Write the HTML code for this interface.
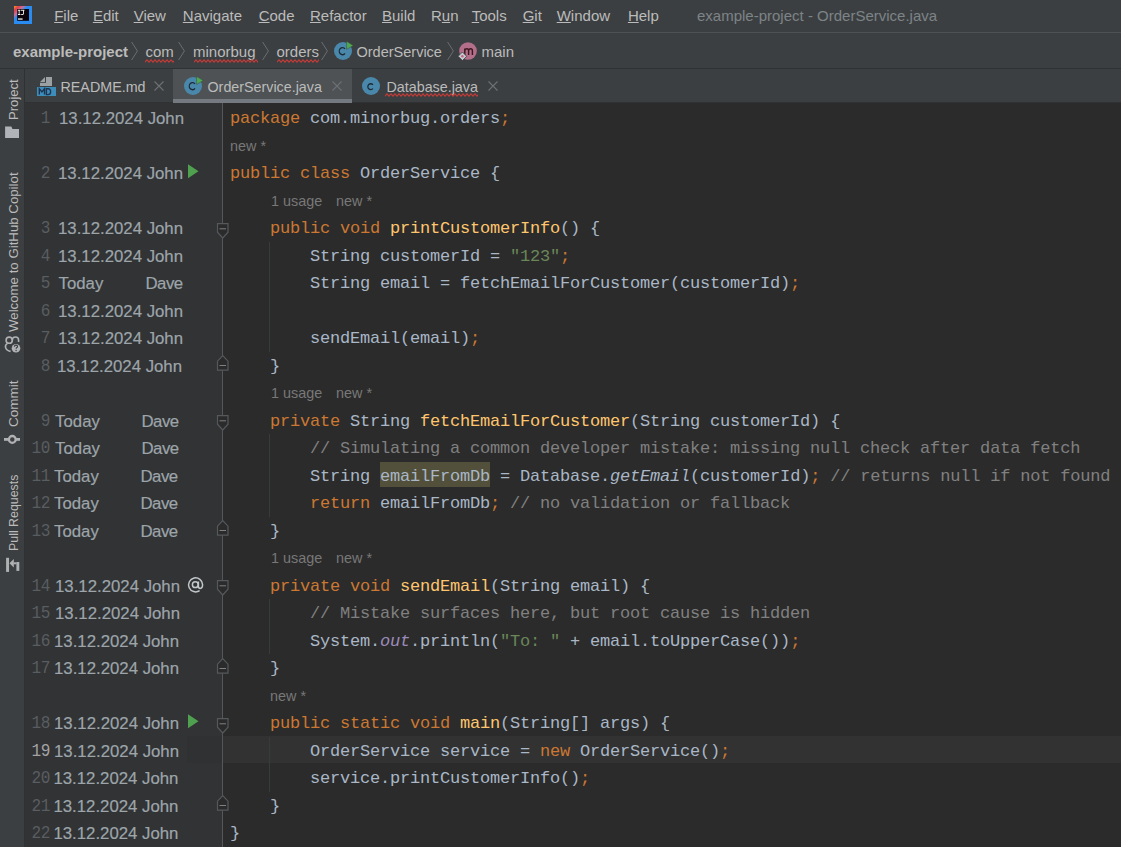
<!DOCTYPE html>
<html><head><meta charset="utf-8"><style>
*{margin:0;padding:0;box-sizing:border-box}
html,body{width:1121px;height:847px;overflow:hidden;background:#3c3f41;font-family:"Liberation Sans",sans-serif}
.a{position:absolute;white-space:pre}
.menu{font-size:15px;color:#bbbbbb;top:7px;line-height:17px}
.u{text-decoration:underline;text-underline-offset:1px}
.code{font-family:"Liberation Mono",monospace;font-size:17px;letter-spacing:-0.2px;line-height:27.5px;height:27.5px;color:#a9b7c6}
.hint{font-size:14.4px;color:#787878;line-height:27.5px;height:27.5px;margin-top:0.2px}
.ln{font-family:"Liberation Mono",monospace;font-size:17.5px;letter-spacing:-0.5px;color:#5a5d60;line-height:27.5px;margin-top:0.4px;text-align:right;width:40px;transform:scaleX(0.92);transform-origin:100% 50%}
.bl{font-size:16.8px;color:#9da5aa;line-height:27.5px;margin-top:0.3px;-webkit-text-stroke:0.2px #9da5aa}
.nav{font-size:15px;color:#bbbbbb;top:43px;line-height:18px}
.tab{font-size:14.3px;color:#bbbbbb;top:78px;line-height:18px}
</style></head><body>

<div class="a" style="left:0;top:32px;width:1121px;height:1px;background:#4f5254"></div>
<svg class="a" style="left:14px;top:6px" width="18" height="18" viewBox="0 0 18 18">
<defs><linearGradient id="lg" x1="0" y1="0" x2="1" y2="1"><stop offset="0" stop-color="#f9a21c"/><stop offset="0.13" stop-color="#e23f4a"/><stop offset="0.27" stop-color="#c86f98"/><stop offset="0.38" stop-color="#2a8cf0" stop-opacity="1"/><stop offset="1" stop-color="#2a8cf0"/></linearGradient></defs>
<rect x="0" y="0" width="18" height="18" fill="url(#lg)"/>
<rect x="3.2" y="3" width="11.8" height="11.8" fill="#0c0309"/>
<path d="M3.9 3.8 H6.4 V4.7 H5.6 V8.1 H6.4 V8.9 H3.9 V8.1 H4.7 V4.7 H3.9 Z" fill="#f2f2f2"/>
<path d="M7 3.8 H10.4 V4.7 H9.9 V7.8 C9.9 8.6 9.4 8.9 8.6 8.9 H7.2 V8 H8.4 C8.8 8 9 7.8 9 7.4 V4.7 H7 Z" fill="#f2f2f2"/>
<rect x="4" y="12.4" width="4.6" height="1.3" fill="#f2f2f2"/>
</svg>
<div class="a menu" style="left:54.2px"><span class="u">F</span>ile</div>
<div class="a menu" style="left:92.9px"><span class="u">E</span>dit</div>
<div class="a menu" style="left:133.7px"><span class="u">V</span>iew</div>
<div class="a menu" style="left:182.8px"><span class="u">N</span>avigate</div>
<div class="a menu" style="left:258.7px"><span class="u">C</span>ode</div>
<div class="a menu" style="left:310.0px"><span class="u">R</span>efactor</div>
<div class="a menu" style="left:382.0px"><span class="u">B</span>uild</div>
<div class="a menu" style="left:431.0px">R<span class="u">u</span>n</div>
<div class="a menu" style="left:471.7px"><span class="u">T</span>ools</div>
<div class="a menu" style="left:522.7px"><span class="u">G</span>it</div>
<div class="a menu" style="left:556.7px"><span class="u">W</span>indow</div>
<div class="a menu" style="left:627.9px"><span class="u">H</span>elp</div>
<div class="a menu" style="left:697px;color:#7d8487">example-project - OrderService.java</div>
<div class="a" style="left:0;top:68px;width:1121px;height:1px;background:#2f3133"></div>
<div class="a nav" style="left:13px;font-weight:bold;color:#bbbbbb">example-project</div>
<svg class="a" style="left:130.7px;top:41px" width="8" height="20" viewBox="0 0 8 20"><path d="M0.6 1 L6.4 10 L0.6 19" fill="none" stroke="#6a6e71" stroke-width="1"/></svg>
<div class="a nav" style="left:145.5px">com</div>
<svg class="a" style="left:145px;top:58.5px" width="29" height="4" viewBox="0 0 29 4"><path d="M0 3.2 L2 0.8 L4 3.2 L6 0.8 L8 3.2 L10 0.8 L12 3.2 L14 0.8 L16 3.2 L18 0.8 L20 3.2 L22 0.8 L24 3.2 L26 0.8 L28 3.2 L30 0.8 L32 3.2" fill="none" stroke="#c23b38" stroke-width="1.1"/></svg>
<svg class="a" style="left:177.7px;top:41px" width="8" height="20" viewBox="0 0 8 20"><path d="M0.6 1 L6.4 10 L0.6 19" fill="none" stroke="#6a6e71" stroke-width="1"/></svg>
<div class="a nav" style="left:193px">minorbug</div>
<svg class="a" style="left:194px;top:58.5px" width="64" height="4" viewBox="0 0 64 4"><path d="M0 3.2 L2 0.8 L4 3.2 L6 0.8 L8 3.2 L10 0.8 L12 3.2 L14 0.8 L16 3.2 L18 0.8 L20 3.2 L22 0.8 L24 3.2 L26 0.8 L28 3.2 L30 0.8 L32 3.2 L34 0.8 L36 3.2 L38 0.8 L40 3.2 L42 0.8 L44 3.2 L46 0.8 L48 3.2 L50 0.8 L52 3.2 L54 0.8 L56 3.2 L58 0.8 L60 3.2 L62 0.8 L64 3.2 L66 0.8 L68 3.2" fill="none" stroke="#c23b38" stroke-width="1.1"/></svg>
<svg class="a" style="left:261.9px;top:41px" width="8" height="20" viewBox="0 0 8 20"><path d="M0.6 1 L6.4 10 L0.6 19" fill="none" stroke="#6a6e71" stroke-width="1"/></svg>
<div class="a nav" style="left:276.5px">orders</div>
<svg class="a" style="left:277px;top:58.5px" width="42" height="4" viewBox="0 0 42 4"><path d="M0 3.2 L2 0.8 L4 3.2 L6 0.8 L8 3.2 L10 0.8 L12 3.2 L14 0.8 L16 3.2 L18 0.8 L20 3.2 L22 0.8 L24 3.2 L26 0.8 L28 3.2 L30 0.8 L32 3.2 L34 0.8 L36 3.2 L38 0.8 L40 3.2 L42 0.8 L44 3.2" fill="none" stroke="#c23b38" stroke-width="1.1"/></svg>
<svg class="a" style="left:321.4px;top:41px" width="8" height="20" viewBox="0 0 8 20"><path d="M0.6 1 L6.4 10 L0.6 19" fill="none" stroke="#6a6e71" stroke-width="1"/></svg>
<svg class="a" style="left:333px;top:40.8px" width="22" height="20" viewBox="0 0 22 20"><circle cx="10" cy="10" r="9" fill="#4a88ab"/><path d="M12 7.9 A3.2 3.6 0 1 0 12 12.4" fill="none" stroke="#1d2a36" stroke-width="1.3"/><path d="M13.6 0.3 L20.2 4.6 L13.6 8.4 Z" fill="#4fa94f" stroke="#3a4a48" stroke-width="0.5"/></svg>
<div class="a nav" style="left:356.5px;font-size:14.5px">OrderService</div>
<svg class="a" style="left:446.7px;top:41px" width="8" height="20" viewBox="0 0 8 20"><path d="M0.6 1 L6.4 10 L0.6 19" fill="none" stroke="#6a6e71" stroke-width="1"/></svg>
<svg class="a" style="left:457px;top:41px" width="22" height="22" viewBox="0 0 22 22">
<circle cx="11" cy="10" r="8.8" fill="#b36f89"/>
<path d="M7.8 13.9 V7.4 M7.8 9.6 C8.2 8.2 9 7.8 9.8 7.8 C11 7.8 11.6 8.5 11.6 9.8 V13.9 M11.6 9.6 C12 8.2 12.8 7.8 13.6 7.8 C14.8 7.8 15.4 8.5 15.4 9.8 V13.9" fill="none" stroke="#3e1620" stroke-width="1.45"/>
<path d="M5.4 11 L9.7 15.3 L5.4 19.6 L1.1 15.3 Z" fill="#c4cacd" stroke="#3c3f41" stroke-width="0.8"/>
<circle cx="5.4" cy="15.3" r="1.2" fill="#c95f7d"/>
</svg>
<div class="a nav" style="left:481.5px">main</div>
<div class="a" style="left:24px;top:69px;width:1px;height:778px;background:#2f3133"></div>
<div class="a" style="left:6.7px;top:120px;font-size:13.1px;color:#bbbbbb;line-height:14px;transform-origin:0 0;transform:rotate(-90deg)">Project</div>
<svg class="a" style="left:5px;top:126px" width="14" height="13" viewBox="0 0 14 13"><path d="M0.1 0.5 H6.3 L7.5 3 H14 V12.1 H0.1 Z" fill="#b0b4b8"/></svg>
<div class="a" style="left:6.7px;top:332px;font-size:13.25px;color:#bbbbbb;line-height:14px;transform-origin:0 0;transform:rotate(-90deg)">Welcome to GitHub Copilot</div>
<svg class="a" style="left:3px;top:335px" width="18" height="19" viewBox="0 0 18 19"><g fill="none" stroke="#afb1b3" stroke-width="1.6"><circle cx="6.2" cy="5.2" r="3.1"/><path d="M9.3 5.2 A3.1 3.1 0 0 1 15.6 5.2 V7"/><path d="M4.2 8.6 C1.6 10.2 1.4 15.2 7.6 16.4"/></g><circle cx="13" cy="13.2" r="4.3" fill="#afb1b3"/><path d="M11.4 11.8 C11.4 10.6 12.2 10.1 13 10.1 C13.9 10.1 14.6 10.7 14.6 11.5 C14.6 12.5 13.1 12.6 13.1 13.8" fill="none" stroke="#3c3f41" stroke-width="1.1"/><circle cx="13.1" cy="15.5" r="0.7" fill="#3c3f41"/></svg>
<div class="a" style="left:6.7px;top:427px;font-size:13.5px;color:#bbbbbb;line-height:14px;transform-origin:0 0;transform:rotate(-90deg)">Commit</div>
<svg class="a" style="left:4px;top:433px" width="17" height="13" viewBox="0 0 17 13"><path d="M0 6.4 H16" stroke="#afb1b3" stroke-width="2.8"/><circle cx="8.3" cy="6.4" r="3.4" fill="#3c3f41" stroke="#afb1b3" stroke-width="2.3"/></svg>
<div class="a" style="left:6.7px;top:551px;font-size:12.4px;color:#bbbbbb;line-height:14px;transform-origin:0 0;transform:rotate(-90deg)">Pull Requests</div>
<svg class="a" style="left:5px;top:556px" width="16" height="16" viewBox="0 0 16 16"><g fill="#afb1b3"><rect x="1.1" y="1.8" width="2.95" height="14.1"/><path d="M4.5 7.2 L8.8 3 V11.4 Z"/><rect x="8.5" y="6.3" width="3" height="2"/><rect x="11.4" y="6" width="2.9" height="8.9"/></g></svg>
<div class="a" style="left:173px;top:69px;width:179px;height:34px;background:#4e5254"></div>
<div class="a" style="left:25px;top:102px;width:1096px;height:1px;background:#2f3133"></div>
<div class="a" style="left:173px;top:99px;width:179px;height:4px;background:#747a80"></div>
<svg class="a" style="left:36px;top:76px" width="21" height="21" viewBox="0 0 21 21">
<path d="M4 6 L9 1 V6 Z" fill="#9aa0a3"/><rect x="10" y="1" width="6" height="9" fill="#9aa0a3"/><rect x="4" y="6.8" width="12" height="3.2" fill="#9aa0a3"/>
<rect x="1" y="11" width="19" height="9" fill="#3d8dbb"/>
<path d="M3.3 18.6 V12.8 L5.9 16 L8.5 12.8 V18.6 M10.4 12.8 V18.6 H12 C13.9 18.6 14.6 17.2 14.6 15.7 C14.6 14.2 13.9 12.8 12 12.8 Z" fill="none" stroke="#1d3350" stroke-width="1.4"/>
</svg>
<div class="a tab" style="left:60.5px">README.md</div>
<svg class="a" style="left:154px;top:81px" width="10" height="10" viewBox="0 0 10 10"><path d="M0.5 0.5 L9.5 9.5 M9.5 0.5 L0.5 9.5" stroke="#6e7173" stroke-width="1.1"/></svg>
<svg class="a" style="left:183px;top:75.75px" width="22" height="20" viewBox="0 0 22 20"><circle cx="10" cy="10" r="9" fill="#4a88ab"/><path d="M12 7.9 A3.2 3.6 0 1 0 12 12.4" fill="none" stroke="#1d2a36" stroke-width="1.3"/><path d="M13.6 0.3 L20.2 4.6 L13.6 8.4 Z" fill="#4fa94f" stroke="#3a4a48" stroke-width="0.5"/></svg>
<div class="a tab" style="left:207.5px">OrderService.java</div>
<svg class="a" style="left:331.5px;top:81px" width="10" height="10" viewBox="0 0 10 10"><path d="M0.5 0.5 L9.5 9.5 M9.5 0.5 L0.5 9.5" stroke="#6e7173" stroke-width="1.1"/></svg>
<svg class="a" style="left:361px;top:75.75px" width="22" height="20" viewBox="0 0 22 20"><circle cx="10" cy="10" r="9" fill="#4a88ab"/><path d="M11.9 8.7 A2.9 2.9 0 1 0 11.9 12.6" fill="none" stroke="#1d2a36" stroke-width="1.3"/></svg>
<div class="a tab" style="left:386.5px">Database.java</div>
<svg class="a" style="left:385px;top:93.0px" width="93" height="4" viewBox="0 0 93 4"><path d="M0 3.2 L2 0.8 L4 3.2 L6 0.8 L8 3.2 L10 0.8 L12 3.2 L14 0.8 L16 3.2 L18 0.8 L20 3.2 L22 0.8 L24 3.2 L26 0.8 L28 3.2 L30 0.8 L32 3.2 L34 0.8 L36 3.2 L38 0.8 L40 3.2 L42 0.8 L44 3.2 L46 0.8 L48 3.2 L50 0.8 L52 3.2 L54 0.8 L56 3.2 L58 0.8 L60 3.2 L62 0.8 L64 3.2 L66 0.8 L68 3.2 L70 0.8 L72 3.2 L74 0.8 L76 3.2 L78 0.8 L80 3.2 L82 0.8 L84 3.2 L86 0.8 L88 3.2 L90 0.8 L92 3.2 L94 0.8 L96 3.2" fill="none" stroke="#c23b38" stroke-width="1.1"/></svg>
<svg class="a" style="left:488px;top:81px" width="10" height="10" viewBox="0 0 10 10"><path d="M0.5 0.5 L9.5 9.5 M9.5 0.5 L0.5 9.5" stroke="#6e7173" stroke-width="1.1"/></svg>
<div class="a" style="left:25px;top:103px;width:197px;height:744px;background:#313335"></div>
<div class="a" style="left:222px;top:103px;width:899px;height:744px;background:#2b2b2b"></div>
<div class="a" style="left:222px;top:103px;width:1px;height:744px;background:#555759"></div>
<div class="a" style="left:223px;top:735.7px;width:898px;height:27px;background:#323232"></div>
<div class="a" style="left:187px;top:735.7px;width:35px;height:27px;background:#2f3133"></div>
<div class="a" style="left:380px;top:461.5px;width:110px;height:25.5px;background:#52503a"></div>
<div class="a" style="left:269px;top:241.5px;width:1px;height:110.0px;background:#393b3b"></div>
<div class="a" style="left:269px;top:434.0px;width:1px;height:82.5px;background:#393b3b"></div>
<div class="a" style="left:269px;top:599.0px;width:1px;height:55.0px;background:#393b3b"></div>
<div class="a" style="left:269px;top:736.5px;width:1px;height:55.0px;background:#393b3b"></div>
<div class="a code" style="left:230px;top:105.0px"><span style="color:#cc7832;">package</span><span style="color:#a9b7c6;"> com.minorbug.orders</span><span style="color:#cc7832;">;</span></div>
<div class="a code" style="left:230px;top:160.0px"><span style="color:#cc7832;">public class</span><span style="color:#a9b7c6;"> OrderService {</span></div>
<div class="a code" style="left:230px;top:215.0px"><span style="color:#cc7832;">    public void </span><span style="color:#ffc66d;">printCustomerInfo</span><span style="color:#a9b7c6;">() {</span></div>
<div class="a code" style="left:230px;top:242.5px"><span style="color:#a9b7c6;">        String customerId = </span><span style="color:#6a8759;">&quot;123&quot;</span><span style="color:#cc7832;">;</span></div>
<div class="a code" style="left:230px;top:270.0px"><span style="color:#a9b7c6;">        String email = fetchEmailForCustomer(customerId)</span><span style="color:#cc7832;">;</span></div>
<div class="a code" style="left:230px;top:325.0px"><span style="color:#a9b7c6;">        sendEmail(email)</span><span style="color:#cc7832;">;</span></div>
<div class="a code" style="left:230px;top:352.5px"><span style="color:#a9b7c6;">    }</span></div>
<div class="a code" style="left:230px;top:407.5px"><span style="color:#cc7832;">    private </span><span style="color:#a9b7c6;">String </span><span style="color:#ffc66d;">fetchEmailForCustomer</span><span style="color:#a9b7c6;">(String customerId) {</span></div>
<div class="a code" style="left:230px;top:435.0px"><span style="color:#808080;">        // Simulating a common developer mistake: missing null check after data fetch</span></div>
<div class="a code" style="left:230px;top:462.5px"><span style="color:#a9b7c6;">        String </span><span style="color:#a9b7c6;">emailFromDb</span><span style="color:#a9b7c6;"> = Database.</span><span style="color:#a9b7c6;font-style:italic;">getEmail</span><span style="color:#a9b7c6;">(customerId)</span><span style="color:#cc7832;">;</span><span style="color:#808080;"> // returns null if not found</span></div>
<div class="a code" style="left:230px;top:490.0px"><span style="color:#cc7832;">        return </span><span style="color:#a9b7c6;">emailFromDb</span><span style="color:#cc7832;">;</span><span style="color:#808080;"> // no validation or fallback</span></div>
<div class="a code" style="left:230px;top:517.5px"><span style="color:#a9b7c6;">    }</span></div>
<div class="a code" style="left:230px;top:572.5px"><span style="color:#cc7832;">    private void </span><span style="color:#ffc66d;">sendEmail</span><span style="color:#a9b7c6;">(String email) {</span></div>
<div class="a code" style="left:230px;top:600.0px"><span style="color:#808080;">        // Mistake surfaces here, but root cause is hidden</span></div>
<div class="a code" style="left:230px;top:627.5px"><span style="color:#a9b7c6;">        System.</span><span style="color:#9d8cbb;font-style:italic;">out</span><span style="color:#a9b7c6;">.println(</span><span style="color:#6a8759;">&quot;To: &quot;</span><span style="color:#a9b7c6;"> + email.toUpperCase())</span><span style="color:#cc7832;">;</span></div>
<div class="a code" style="left:230px;top:655.0px"><span style="color:#a9b7c6;">    }</span></div>
<div class="a code" style="left:230px;top:710.0px"><span style="color:#cc7832;">    public static void </span><span style="color:#ffc66d;">main</span><span style="color:#a9b7c6;">(String[] args) {</span></div>
<div class="a code" style="left:230px;top:737.5px"><span style="color:#a9b7c6;">        OrderService service = </span><span style="color:#cc7832;">new </span><span style="color:#a9b7c6;">OrderService()</span><span style="color:#cc7832;">;</span></div>
<div class="a code" style="left:230px;top:765.0px"><span style="color:#a9b7c6;">        service.printCustomerInfo()</span><span style="color:#cc7832;">;</span></div>
<div class="a code" style="left:230px;top:792.5px"><span style="color:#a9b7c6;">    }</span></div>
<div class="a code" style="left:230px;top:820.0px"><span style="color:#a9b7c6;">}</span></div>
<div class="a hint" style="left:230px;top:132.5px">new *</div>
<div class="a hint" style="left:271px;top:187.5px">1 usage</div>
<div class="a hint" style="left:336px;top:187.5px">new *</div>
<div class="a hint" style="left:271px;top:380.0px">1 usage</div>
<div class="a hint" style="left:336px;top:380.0px">new *</div>
<div class="a hint" style="left:271px;top:545.0px">1 usage</div>
<div class="a hint" style="left:336px;top:545.0px">new *</div>
<div class="a hint" style="left:270px;top:682.5px">new *</div>
<div class="a ln" style="left:9.7px;top:105.0px;color:#5a5d60">1</div>
<div class="a bl" style="left:59px;top:105.0px">13.12.2024 John</div>
<div class="a ln" style="left:9.7px;top:160.0px;color:#5a5d60">2</div>
<div class="a bl" style="left:58px;top:160.0px">13.12.2024 John</div>
<div class="a ln" style="left:9.7px;top:215.0px;color:#5a5d60">3</div>
<div class="a bl" style="left:58px;top:215.0px">13.12.2024 John</div>
<div class="a ln" style="left:9.7px;top:242.5px;color:#5a5d60">4</div>
<div class="a bl" style="left:58px;top:242.5px">13.12.2024 John</div>
<div class="a ln" style="left:9.7px;top:270.0px;color:#5a5d60">5</div>
<div class="a bl" style="left:58.5px;top:270.0px">Today</div>
<div class="a bl" style="left:145.5px;top:270.0px;letter-spacing:-0.5px">Dave</div>
<div class="a ln" style="left:9.7px;top:297.5px;color:#5a5d60">6</div>
<div class="a bl" style="left:58px;top:297.5px">13.12.2024 John</div>
<div class="a ln" style="left:9.7px;top:325.0px;color:#5a5d60">7</div>
<div class="a bl" style="left:58px;top:325.0px">13.12.2024 John</div>
<div class="a ln" style="left:9.7px;top:352.5px;color:#5a5d60">8</div>
<div class="a bl" style="left:57px;top:352.5px">13.12.2024 John</div>
<div class="a ln" style="left:9.7px;top:407.5px;color:#5a5d60">9</div>
<div class="a bl" style="left:55.1px;top:407.5px">Today</div>
<div class="a bl" style="left:141.5px;top:407.5px;letter-spacing:-0.5px">Dave</div>
<div class="a ln" style="left:9.7px;top:435.0px;color:#5a5d60">10</div>
<div class="a bl" style="left:55.1px;top:435.0px">Today</div>
<div class="a bl" style="left:141.5px;top:435.0px;letter-spacing:-0.5px">Dave</div>
<div class="a ln" style="left:9.7px;top:462.5px;color:#5a5d60">11</div>
<div class="a bl" style="left:54.0px;top:462.5px">Today</div>
<div class="a bl" style="left:140.5px;top:462.5px;letter-spacing:-0.5px">Dave</div>
<div class="a ln" style="left:9.7px;top:490.0px;color:#5a5d60">12</div>
<div class="a bl" style="left:54.0px;top:490.0px">Today</div>
<div class="a bl" style="left:140.5px;top:490.0px;letter-spacing:-0.5px">Dave</div>
<div class="a ln" style="left:9.7px;top:517.5px;color:#5a5d60">13</div>
<div class="a bl" style="left:54.0px;top:517.5px">Today</div>
<div class="a bl" style="left:140.5px;top:517.5px;letter-spacing:-0.5px">Dave</div>
<div class="a ln" style="left:9.7px;top:572.5px;color:#5a5d60">14</div>
<div class="a bl" style="left:55px;top:572.5px">13.12.2024 John</div>
<div class="a ln" style="left:9.7px;top:600.0px;color:#5a5d60">15</div>
<div class="a bl" style="left:55px;top:600.0px">13.12.2024 John</div>
<div class="a ln" style="left:9.7px;top:627.5px;color:#5a5d60">16</div>
<div class="a bl" style="left:54px;top:627.5px">13.12.2024 John</div>
<div class="a ln" style="left:9.7px;top:655.0px;color:#5a5d60">17</div>
<div class="a bl" style="left:54px;top:655.0px">13.12.2024 John</div>
<div class="a ln" style="left:9.7px;top:710.0px;color:#5a5d60">18</div>
<div class="a bl" style="left:54px;top:710.0px">13.12.2024 John</div>
<div class="a ln" style="left:9.7px;top:737.5px;color:#a4a3a3">19</div>
<div class="a bl" style="left:54px;top:737.5px">13.12.2024 John</div>
<div class="a ln" style="left:9.7px;top:765.0px;color:#5a5d60">20</div>
<div class="a bl" style="left:53.4px;top:765.0px">13.12.2024 John</div>
<div class="a ln" style="left:9.7px;top:792.5px;color:#5a5d60">21</div>
<div class="a bl" style="left:53.4px;top:792.5px">13.12.2024 John</div>
<div class="a ln" style="left:9.7px;top:820.0px;color:#5a5d60">22</div>
<div class="a bl" style="left:53.4px;top:820.0px">13.12.2024 John</div>
<svg class="a" style="left:188px;top:163.5px" width="11" height="15" viewBox="0 0 11 15"><path d="M0 0.3 L10.5 7.2 L0 14.2 Z" fill="#4fa04f"/></svg>
<svg class="a" style="left:188px;top:713.5px" width="11" height="15" viewBox="0 0 11 15"><path d="M0 0.3 L10.5 7.2 L0 14.2 Z" fill="#4fa04f"/></svg>
<svg class="a" style="left:187px;top:576.0px" width="18" height="18" viewBox="0 0 18 18"><g fill="none" stroke="#c3c8cb" stroke-width="1.5"><circle cx="8.3" cy="8.7" r="2.9"/><path d="M11.4 5.4 V10.2 C11.4 11.7 12.2 12.4 13.2 12.4 C14.8 12.4 15.6 10.8 15.6 8.6 A7 7 0 1 0 12.6 14.6"/></g></svg>
<svg class="a" style="left:216px;top:222.7px" width="13" height="16" viewBox="0 0 13 16"><path d="M1.5 0.6 H12 V9.2 L6.75 15 L1.5 9.2 Z" fill="#2b2b2b" stroke="#55595c" stroke-width="1.2"/><path d="M3.5 5.8 H10" stroke="#7d8184" stroke-width="1"/></svg>
<svg class="a" style="left:216px;top:415.2px" width="13" height="16" viewBox="0 0 13 16"><path d="M1.5 0.6 H12 V9.2 L6.75 15 L1.5 9.2 Z" fill="#2b2b2b" stroke="#55595c" stroke-width="1.2"/><path d="M3.5 5.8 H10" stroke="#7d8184" stroke-width="1"/></svg>
<svg class="a" style="left:216px;top:580.2px" width="13" height="16" viewBox="0 0 13 16"><path d="M1.5 0.6 H12 V9.2 L6.75 15 L1.5 9.2 Z" fill="#2b2b2b" stroke="#55595c" stroke-width="1.2"/><path d="M3.5 5.8 H10" stroke="#7d8184" stroke-width="1"/></svg>
<svg class="a" style="left:216px;top:717.7px" width="13" height="16" viewBox="0 0 13 16"><path d="M1.5 0.6 H12 V9.2 L6.75 15 L1.5 9.2 Z" fill="#2b2b2b" stroke="#55595c" stroke-width="1.2"/><path d="M3.5 5.8 H10" stroke="#7d8184" stroke-width="1"/></svg>
<svg class="a" style="left:216px;top:355.2px" width="13" height="16" viewBox="0 0 13 16"><path d="M1.5 15.2 H12 V6.2 L6.75 0.6 L1.5 6.2 Z" fill="#2b2b2b" stroke="#55595c" stroke-width="1.2"/><path d="M3.5 10.5 H10" stroke="#7d8184" stroke-width="1"/></svg>
<svg class="a" style="left:216px;top:520.2px" width="13" height="16" viewBox="0 0 13 16"><path d="M1.5 15.2 H12 V6.2 L6.75 0.6 L1.5 6.2 Z" fill="#2b2b2b" stroke="#55595c" stroke-width="1.2"/><path d="M3.5 10.5 H10" stroke="#7d8184" stroke-width="1"/></svg>
<svg class="a" style="left:216px;top:657.7px" width="13" height="16" viewBox="0 0 13 16"><path d="M1.5 15.2 H12 V6.2 L6.75 0.6 L1.5 6.2 Z" fill="#2b2b2b" stroke="#55595c" stroke-width="1.2"/><path d="M3.5 10.5 H10" stroke="#7d8184" stroke-width="1"/></svg>
<svg class="a" style="left:216px;top:795.2px" width="13" height="16" viewBox="0 0 13 16"><path d="M1.5 15.2 H12 V6.2 L6.75 0.6 L1.5 6.2 Z" fill="#2b2b2b" stroke="#55595c" stroke-width="1.2"/><path d="M3.5 10.5 H10" stroke="#7d8184" stroke-width="1"/></svg>
</body></html>
